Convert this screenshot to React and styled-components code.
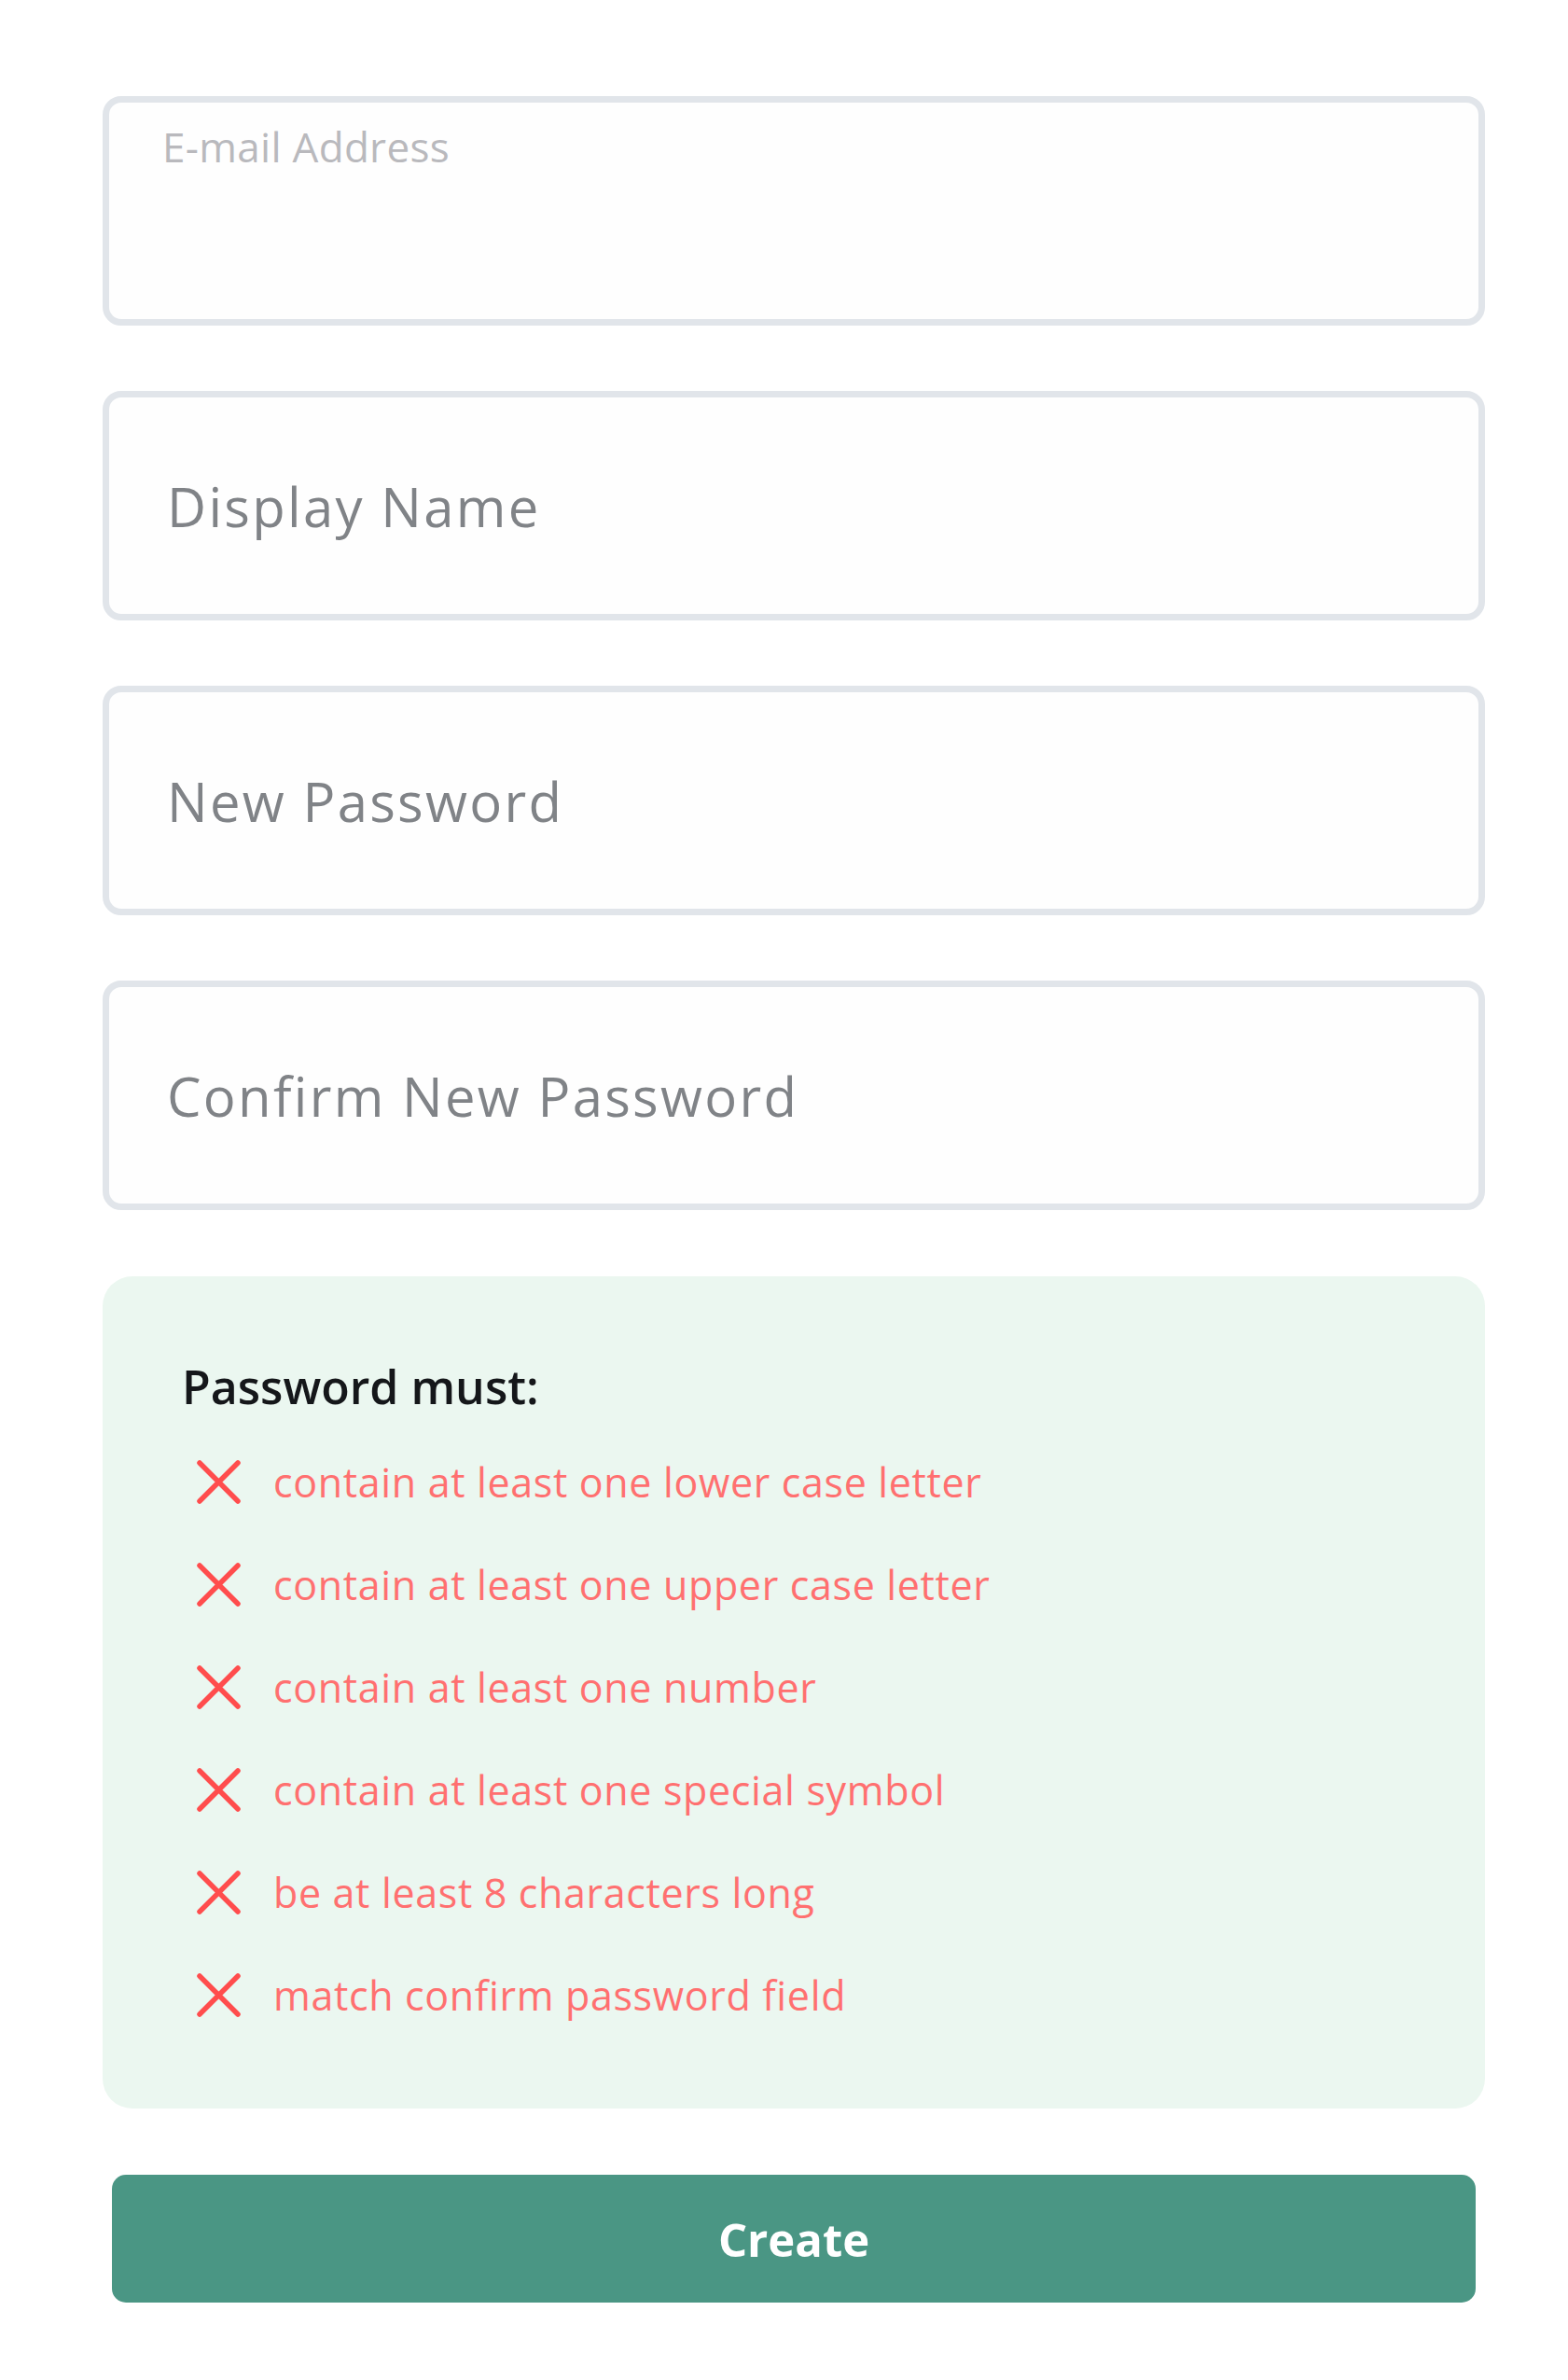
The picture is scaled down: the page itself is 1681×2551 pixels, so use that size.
import React from "react";
import styled, { createGlobalStyle } from "styled-components";

const Global = createGlobalStyle`
  html, body { margin: 0; padding: 0; background: #ffffff; }
  body { font-family: "Open Sans", "Noto Sans", sans-serif; }
  * { box-sizing: border-box; }
`;

const Page = styled.div`
  width: 1681px;
  min-height: 2551px;
  padding: 103px 0 0 110px;
  background: #ffffff;
`;

const Form = styled.form`
  width: 1482px;
  display: flex;
  flex-direction: column;
  gap: 70px;
`;

const Field = styled.label`
  display: flex;
  flex-direction: column;
  justify-content: ${(p) => (p.$floating ? "flex-start" : "center")};
  height: 246px;
  border: 7px solid #e1e5ea;
  border-radius: 20px;
  background: #fefefe;
  padding: ${(p) => (p.$floating ? "17px 0 0 57px" : "0 0 0 62px")};
`;

const FloatLabel = styled.span`
  font-family: "Open Sans", sans-serif;
  font-size: 44px;
  letter-spacing: 0.3px;
  line-height: 60px;
  color: #b9b9bd;
`;

const Input = styled.input`
  border: none;
  outline: none;
  background: transparent;
  font-family: "Open Sans", sans-serif;
  font-size: 58px;
  letter-spacing: 2.3px;
  color: #333;
  padding: 0;
  width: 100%;
  &::placeholder {
    color: #808387;
  }
`;

const Rules = styled.div`
  background: #ebf7f0;
  border-radius: 32px;
  padding: 88px 0 67px 85px;
  display: flex;
  flex-direction: column;
  margin-top: 1px;
`;

const RulesTitle = styled.div`
  font-family: "Open Sans", sans-serif;
  font-weight: 600;
  font-size: 50px;
  line-height: 60px;
  color: #15171a;
  margin-bottom: 17px;
`;

const RuleRow = styled.div`
  height: 110px;
  display: flex;
  align-items: center;
  gap: 34px;
  padding-left: 15px;
`;

const RuleText = styled.span`
  font-family: "Open Sans", sans-serif;
  font-size: 43px;
  letter-spacing: 0.65px;
  color: ${(p) => (p.$ok ? "#3a9a6e" : "#ff7070")};
`;

const CreateButton = styled.button`
  margin: 1px 10px 0;
  height: 137px;
  border: none;
  border-radius: 15px;
  background: #4a9684;
  color: #ffffff;
  font-family: "Open Sans", sans-serif;
  font-weight: 700;
  font-size: 49px;
  cursor: pointer;
`;

const Cross = () => (
  <svg width="49" height="47" viewBox="0 0 49 47" aria-hidden="true">
    <path
      d="M4 3 L45 44 M45 3 L4 44"
      stroke="#ff4d4d"
      strokeWidth="5.5"
      strokeLinecap="round"
      fill="none"
    />
  </svg>
);

const rules = [
  "contain at least one lower case letter",
  "contain at least one upper case letter",
  "contain at least one number",
  "contain at least one special symbol",
  "be at least 8 characters long",
  "match confirm password field",
];

export default function App() {
  return (
    <>
      <Global />
      <Page>
        <Form onSubmit={(e) => e.preventDefault()}>
          <Field $floating>
            <FloatLabel>E-mail Address</FloatLabel>
            <Input type="email" />
          </Field>
          <Field>
            <Input type="text" placeholder="Display Name" />
          </Field>
          <Field>
            <Input type="password" placeholder="New Password" />
          </Field>
          <Field>
            <Input type="password" placeholder="Confirm New Password" />
          </Field>
          <Rules>
            <RulesTitle>Password must:</RulesTitle>
            {rules.map((r) => (
              <RuleRow key={r}>
                <Cross />
                <RuleText>{r}</RuleText>
              </RuleRow>
            ))}
          </Rules>
          <CreateButton type="submit">Create</CreateButton>
        </Form>
      </Page>
    </>
  );
}
